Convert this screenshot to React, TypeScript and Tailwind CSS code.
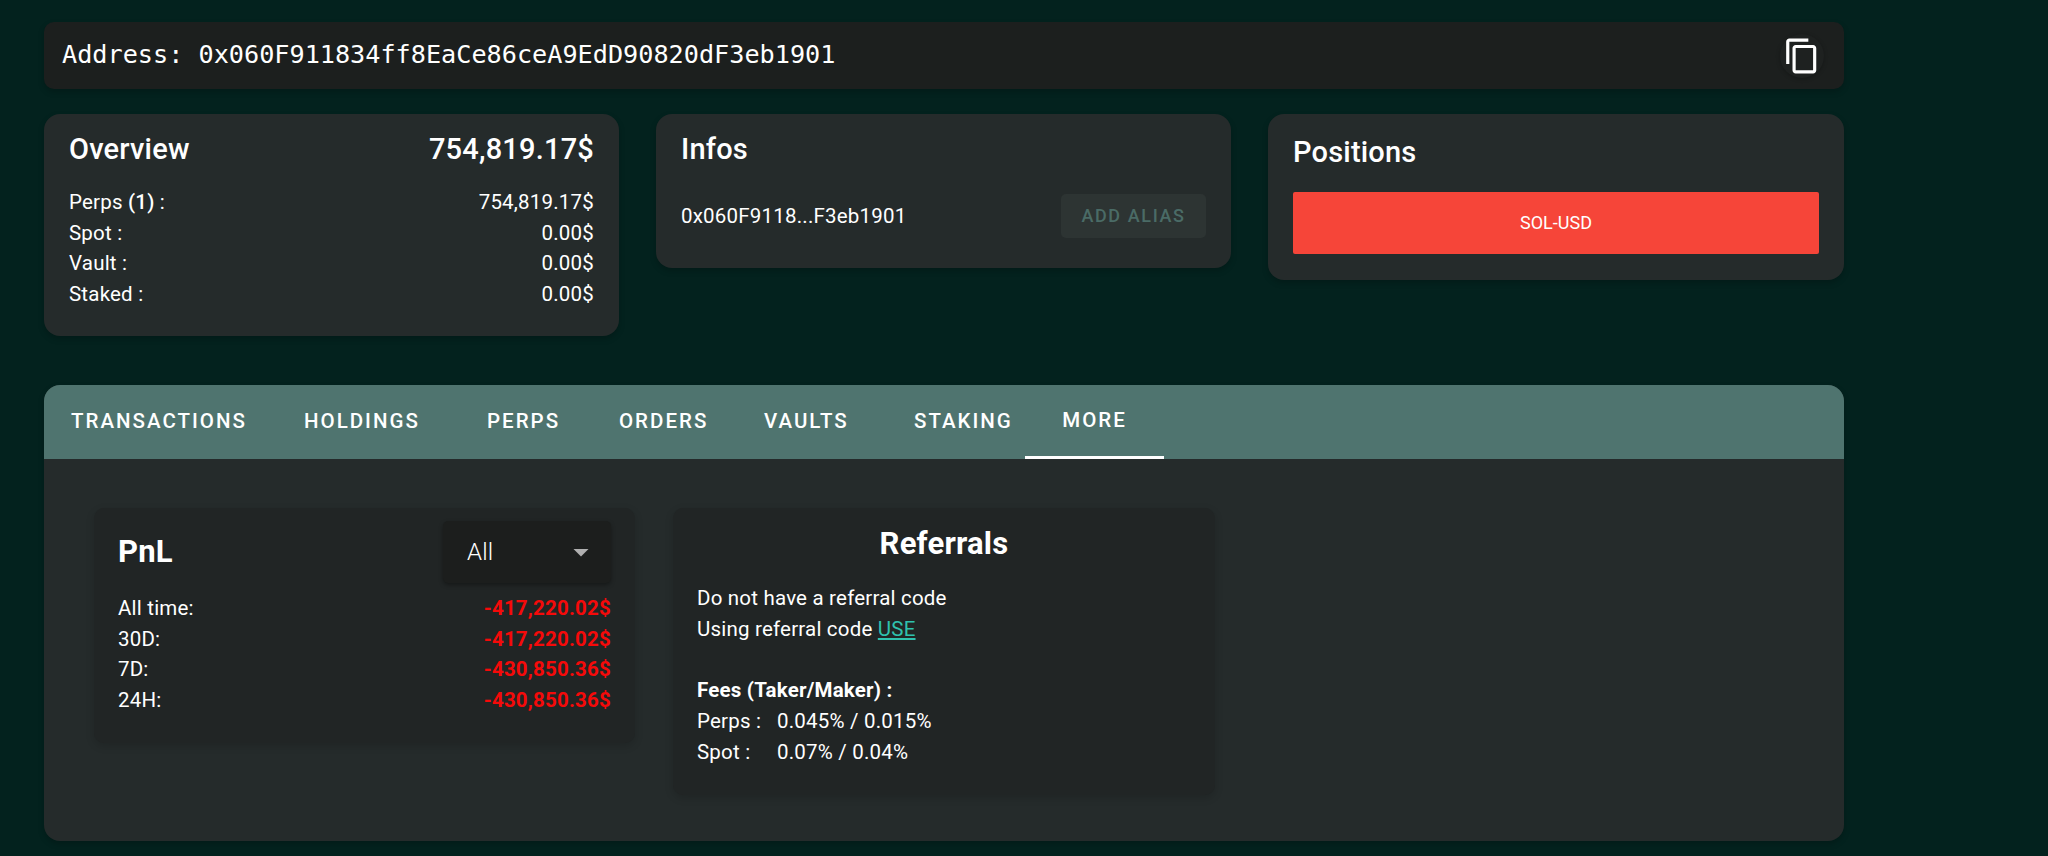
export default function App() {
  const card = "rounded-[16px] bg-[#252b2b] shadow-[0_3px_6px_rgba(0,0,0,0.2)]";
  const tabs = [
    ["TRANSACTIONS", "w-[221px] pl-[27px]"],
    ["HOLDINGS", "w-[172px] pl-[39px]"],
    ["PERPS", "w-[139px] pl-[50px]"],
    ["ORDERS", "w-[144px] pl-[43px]"],
    ["VAULTS", "w-[140px] pl-[44px]"],
    ["STAKING", "w-[165px] pl-[54px]"],
  ];
  const overview = [
    [<>Perps <b className="font-medium">(1)</b> :</>, "754,819.17$"],
    ["Spot :", "0.00$"],
    ["Vault :", "0.00$"],
    ["Staked :", "0.00$"],
  ];
  const pnl = [
    ["All time:", "-417,220.02$"],
    ["30D:", "-417,220.02$"],
    ["7D:", "-430,850.36$"],
    ["24H:", "-430,850.36$"],
  ];
  return (
    <div className="min-h-[856px] bg-[#03221e] pl-[44px] pt-[22px] font-['Roboto',sans-serif] text-[20.5px] leading-[30.7px] tracking-[0.2px] text-white overflow-hidden">
      <div className="w-[1800px] h-[856px]">
        <div className="flex h-[67px] items-center justify-between rounded-[10px] bg-[#1c1f1e] pl-[18px] pr-[20px] shadow-[0_3px_6px_rgba(0,0,0,0.2)]">
          <span className="font-['DejaVu_Sans_Mono',monospace] text-[25.2px] tracking-normal">Address: 0x060F911834ff8EaCe86ceA9EdD90820dF3eb1901</span>
          <div className="flex h-[44px] w-[44px] items-center justify-center rounded-full bg-[#1e2120] shadow-[0_1px_4px_rgba(0,0,0,0.25)]">
            <svg viewBox="0 0 24 24" className="h-[38px] w-[38px] fill-white"><path d="M16 1H4c-1.1 0-2 .9-2 2v14h2V3h12V1zm3 4H8c-1.1 0-2 .9-2 2v14c0 1.1.9 2 2 2h11c1.1 0 2-.9 2-2V7c0-1.1-.9-2-2-2zm0 16H8V7h11v14z"/></svg>
          </div>
        </div>

        <div className="mt-[25px] flex items-start gap-[37px]">
          <div className={`${card} h-[222px] w-[575px] px-[25px] pt-[14px]`}>
            <div className="flex items-center justify-between text-[29px] font-medium leading-[42px]">
              <span>Overview</span>
              <span>754,819.17$</span>
            </div>
            <div className="mt-[17px]">
              {overview.map((r, i) => (
                <div key={i} className="flex justify-between"><span>{r[0]}</span><span>{r[1]}</span></div>
              ))}
            </div>
          </div>

          <div className={`${card} h-[154px] w-[575px] px-[25px] pt-[14px]`}>
            <div className="text-[29px] font-medium leading-[42px]">Infos</div>
            <div className="mt-[24px] flex items-center justify-between">
              <span>0x060F9118...F3eb1901</span>
              <span className="flex h-[44px] w-[145px] items-center justify-center rounded-[5px] bg-[#2d3433] text-[18px] font-medium tracking-[1.6px] text-[#4a6b66]">ADD ALIAS</span>
            </div>
          </div>

          <div className={`${card} h-[166px] w-[576px] px-[25px] pt-[17px]`}>
            <div className="text-[29px] font-medium leading-[42px]">Positions</div>
            <div className="mt-[19px] flex h-[62px] items-center justify-center rounded-[2px] bg-[#f64539] text-[18px] font-normal tracking-normal">SOL-USD</div>
          </div>
        </div>

        <div className="mt-[49px] h-[456px] overflow-hidden rounded-[16px] bg-[#252b2b] shadow-[0_3px_6px_rgba(0,0,0,0.2)]">
          <div className="flex h-[74px] bg-[#4f746f] text-[20.5px] font-medium tracking-[2px]">
            {tabs.map(([t, c]) => (
              <div key={t} className={`${c} flex h-full items-center pb-[2px]`}>{t}</div>
            ))}
            <div className="flex h-full w-[139px] items-center justify-center border-b-[3px] border-white">MORE</div>
          </div>
          <div className="flex items-start gap-[38px] pl-[50px] pt-[49px]">
            <div className="h-[235px] w-[541px] rounded-[10px] bg-[#212525] px-[24px] pt-[13px] shadow-[0_3px_8px_rgba(0,0,0,0.15)]">
              <div className="flex items-center justify-between">
                <span className="text-[31px] font-bold leading-[42px]">PnL</span>
                <div className="flex h-[62px] w-[168px] items-center justify-between rounded-[5px] bg-[#1c1e1d] pl-[24px] pr-[12px] text-[24px] shadow-[0_2px_4px_rgba(0,0,0,0.35)]">
                  <span className="font-light">All</span>
                  <svg viewBox="0 0 24 24" className="h-[36px] w-[36px] fill-[#b0b0b0]"><path d="M7 10l5 5 5-5z"/></svg>
                </div>
              </div>
              <div className="mt-[10px]">
                {pnl.map((r) => (
                  <div key={r[0]} className="flex justify-between"><span>{r[0]}</span><span className="font-bold text-[#f50a0a]">{r[1]}</span></div>
                ))}
              </div>
            </div>

            <div className="h-[287px] w-[542px] rounded-[10px] bg-[#212525] px-[24px] pt-[15px] shadow-[0_3px_8px_rgba(0,0,0,0.15)]">
              <div className="text-center text-[31px] font-bold leading-[42px]">Referrals</div>
              <div className="mt-[18px]">Do not have a referral code</div>
              <div>Using referral code <span className="text-[#2fc1ae] underline">USE</span></div>
              <div className="mt-[30.7px] font-bold">Fees (Taker/Maker) :</div>
              <div className="flex"><span className="w-[80px]">Perps :</span><span>0.045% / 0.015%</span></div>
              <div className="flex"><span className="w-[80px]">Spot :</span><span>0.07% / 0.04%</span></div>
            </div>
          </div>
        </div>
      </div>
    </div>
  );
}
